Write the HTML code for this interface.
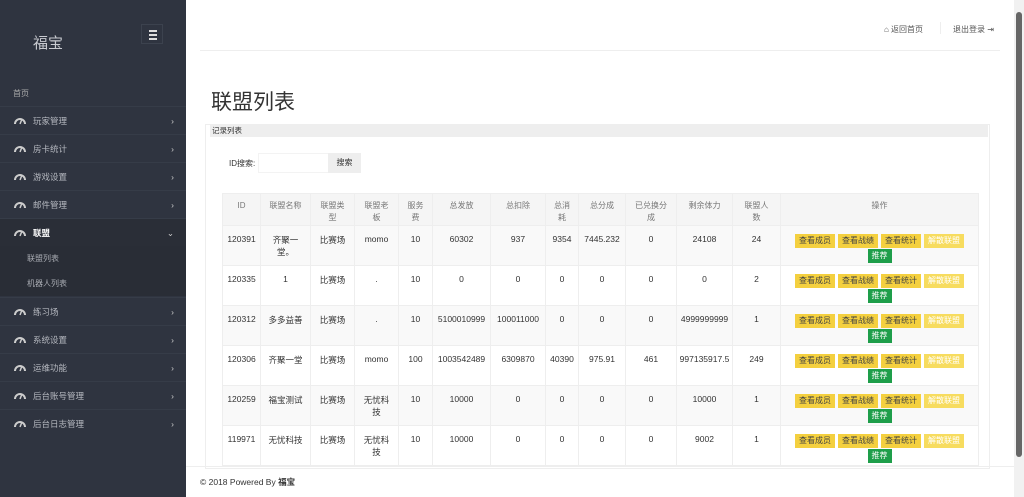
<!DOCTYPE html>
<html><head><meta charset="utf-8"><style>
*{box-sizing:border-box;margin:0;padding:0}
body{width:1024px;height:497px;overflow:hidden;font-family:"Liberation Sans","Noto Sans CJK SC",sans-serif;font-size:9px;color:#333;background:#fff;position:relative}
.sb{position:absolute;left:0;top:0;width:186px;height:497px;background:#2f3440}
.logo{position:absolute;left:33px;top:32px;font-size:15px;color:#c8cad0}
.tog{position:absolute;left:141px;top:24px;width:22px;height:20px;border:1px solid #3c424e}
.tog i{position:absolute;left:7px;width:8px;height:1.5px;background:#ddd}
.home{position:absolute;left:13px;top:88px;color:#aaa;font-size:8px}
.it{position:absolute;left:0;width:186px;height:28px;border-top:1px solid #363c48;color:#b5b8bf;font-size:8.5px;line-height:28px;padding-left:33px}
.it svg{position:absolute;left:14px;top:10px}
.it b{position:absolute;right:12px;font-weight:normal;color:#ccc}
.act{background:#2a2e37;color:#fff;font-weight:bold}
.sub{position:absolute;left:0;width:186px;height:25px;background:#292d36;color:#a8abb2;font-size:8px;line-height:25px;padding-left:27px}
.hdr{position:absolute;left:200px;top:50px;width:800px;border-top:1px solid #eee}
.tr{position:absolute;top:24px;font-size:8px;color:#555}
h1{position:absolute;left:211px;top:86px;font-size:21px;font-weight:normal;color:#333}
.pbox{position:absolute;left:205px;top:124px;width:785px;height:345px;border:1px solid #eee}
.ph{position:absolute;left:210px;top:125px;width:778px;height:12px;background:#eee;font-size:7.5px;padding-left:2px;line-height:12px}
.srch{position:absolute;left:229px;top:158px;font-size:8px}
.inp{position:absolute;left:258px;top:153px;width:72px;height:20px;background:#fff;border:1px solid #f3f3f3}
.btn{position:absolute;left:328px;top:153px;width:33px;height:20px;background:#eee;font-size:8px;line-height:20px;text-align:center}
table{position:absolute;left:222px;top:193px;width:757px;border-collapse:collapse;font-size:8.5px}
td,th{border:1px solid #eee;text-align:center;vertical-align:top;padding-top:8px;font-weight:normal}
th{height:32px;background:#f5f5f5;color:#777;font-size:8px;line-height:12px;padding-top:6px}
tr.r td{height:40px}
tr.r:nth-child(odd) td{background:#f9f9f9}
.y{display:inline-block;background:#f4d03f;color:#444;font-size:8px;padding:1px 4px;margin:0 1.5px;line-height:12px}
.y2{background:#f7dc5f;color:#fff}
.g{display:inline-block;background:#1e9e4a;color:#fff;font-size:8px;padding:1px 4px;line-height:12px;margin-top:1px}
.ft{position:absolute;left:186px;top:466px;width:828px;border-top:1px solid #eee;padding:9px 14px;font-size:8.5px}
.scr{position:absolute;left:1014px;top:0;width:10px;height:497px;background:#f1f1f1}
.scr i{position:absolute;left:2px;top:12px;width:6px;height:445px;background:#666;border-radius:3px}
</style></head><body>
<div class="sb">
<div class="logo">福宝</div>
<div class="tog"><i style="top:5px"></i><i style="top:9px"></i><i style="top:13px"></i></div>
<div class="home">首页</div>
</div>
<div id="menu"></div>
<div class="hdr"></div>
<div class="tr" style="left:884px">&#8962; 返回首页</div>
<div style="position:absolute;left:940px;top:22px;height:12px;border-left:1px solid #eee"></div>
<div class="tr" style="left:953px">退出登录 &#x21E5;</div>
<h1>联盟列表</h1>
<div class="pbox"></div>
<div class="ph">记录列表</div>
<div class="srch">ID搜索:</div><div class="inp"></div><div class="btn">搜索</div>
<table>
<tr><th style="width:38px">ID</th><th style="width:50px">联盟名称</th><th style="width:44px">联盟类<br>型</th><th style="width:44px">联盟老<br>板</th><th style="width:34px">服务<br>费</th><th style="width:58px">总发放</th><th style="width:55px">总扣除</th><th style="width:33px">总消<br>耗</th><th style="width:47px">总分成</th><th style="width:51px">已兑换分<br>成</th><th style="width:56px">剩余体力</th><th style="width:48px">联盟人<br>数</th><th>操作</th></tr>
</table>
<div class="ft">© 2018 Powered By <b>福宝</b></div>
<div class="scr"><i></i></div>
<script>
var m=[["玩家管理",106],["房卡统计",134],["游戏设置",162],["邮件管理",190],["联盟",218,1],["练习场",297],["系统设置",325],["运维功能",353],["后台账号管理",381],["后台日志管理",409]];
var g='<svg width="12" height="8" viewBox="0 0 12 8"><path d="M1 7A5 5 0 0 1 11 7" fill="none" stroke="#ccc" stroke-width="2"/><path d="M6 7L8 2" stroke="#ccc" stroke-width="1.5"/></svg>';
var h='';m.forEach(function(x){h+='<div class="it'+(x[2]?' act':'')+'" style="top:'+x[1]+'px">'+g+x[0]+'<b>'+(x[2]?'&#8964;':'&#8250;')+'</b></div>'});
h+='<div class="sub" style="top:246px">联盟列表</div><div class="sub" style="top:271px">机器人列表</div>';
document.getElementById('menu').innerHTML=h;
var d=[["120391","齐聚一<br>堂。","比赛场","momo","10","60302","937","9354","7445.232","0","24108","24"],
["120335","1","比赛场",".","10","0","0","0","0","0","0","2"],
["120312","多多益善","比赛场",".","10","5100010999","100011000","0","0","0","4999999999","1"],
["120306","齐聚一堂","比赛场","momo","100","1003542489","6309870","40390","975.91","461","997135917.5","249"],
["120259","福宝测试","比赛场","无忧科<br>技","10","10000","0","0","0","0","10000","1"],
["119971","无忧科技","比赛场","无忧科<br>技","10","10000","0","0","0","0","9002","1"]];
var t=document.querySelector('table'),s='';
d.forEach(function(r){s+='<tr class="r">';r.forEach(function(c){s+='<td>'+c+'</td>'});
s+='<td><span class="y">查看成员</span><span class="y">查看战绩</span><span class="y">查看统计</span><span class="y y2">解散联盟</span><br><span class="g">推荐</span></td></tr>'});
t.insertAdjacentHTML('beforeend',s);
</script>
</body></html>
